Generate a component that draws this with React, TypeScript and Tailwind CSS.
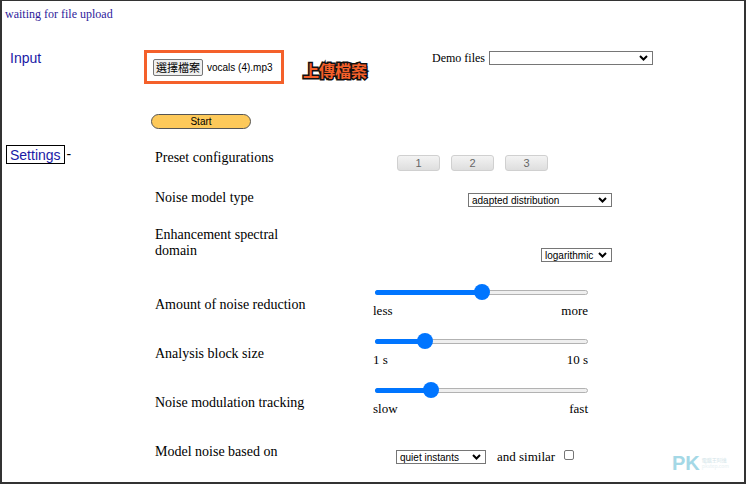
const serif = "font-['Liberation_Serif',serif]";
const sans = "font-['Liberation_Sans',Arial,sans-serif]";

function Chevron() {
  return (
    <svg width="9" height="6" viewBox="0 0 9 6" className="shrink-0">
      <path d="M1 1 L4.5 4.5 L8 1" fill="none" stroke="#000" strokeWidth="2" />
    </svg>
  );
}

function FakeSelect({ text, width }: { text: string; width: string }) {
  return (
    <div
      className={`${width} h-[14px] border border-[#767676] bg-white flex items-center justify-between pl-[3px] pr-[4px] ${sans} text-[10px] leading-[11px] text-black`}
    >
      <span>{text}</span>
      <Chevron />
    </div>
  );
}

function Slider({ value, left, right }: { value: number; left: string; right: string }) {
  const pos = 8 + value * 197;
  return (
    <div className="ml-[3px] w-[216px]">
      <div className="relative w-[213px] h-[16px]">
        <div className="absolute left-0 right-0 top-[6px] h-[5px] rounded-full border border-[#b2b2b2] bg-[#efefef]" />
        <div
          className="absolute left-0 top-[6px] h-[5px] rounded-l-full bg-[#0075ff]"
          style={{ width: pos }}
        />
        <div
          className="absolute top-0 w-[16px] h-[16px] rounded-full bg-[#0075ff]"
          style={{ left: pos - 8 }}
        />
      </div>
      <div className={`-ml-[2px] w-[215px] mt-[3px] flex justify-between ${serif} text-[13px] leading-[15px] text-black`}>
        <span>{left}</span>
        <span>{right}</span>
      </div>
    </div>
  );
}

function Label({ children, className = '' }: { children: React.ReactNode; className?: string }) {
  return (
    <div className={`w-[228px] shrink-0 pl-[11px] ${serif} text-[14px] leading-[16px] text-black ${className}`}>
      {children}
    </div>
  );
}

export default function App() {
  return (
    <div className="relative w-[746px] h-[484px] overflow-hidden bg-white border-l-2 border-t border-r-2 border-b-2 border-[#333]">
      <div className={`pl-[3px] pt-[6px] h-[49px] ${serif} text-[12px] leading-[14px] text-[#2e1b9b]`}>
        waiting for file upload
      </div>

      {/* input row */}
      <div className="flex items-start h-[64px] -mt-[1px]">
        <div className="w-[142px] pl-[4px]">
          <div className={`border border-transparent px-[3px] ${sans} text-[14px] leading-[16px] text-[#1a1aa6]`}>
            Input
          </div>
        </div>
        <div className="mt-[1px] w-[140px] h-[34px] border-[3px] border-[#f4602a] flex items-center pl-[6px] gap-[4px]">
          <div className="h-[17px] px-[2px] border border-[#767676] rounded-[2px] bg-[#efefef] flex items-center text-[11px] leading-[13px] text-black font-['Noto_Sans_CJK_TC',sans-serif]">
            選擇檔案
          </div>
          <span className={`${sans} text-[10px] text-black`}>vocals (4).mp3</span>
        </div>
        <div className="ml-[19px] mt-[11px] text-[16px] leading-[20px] font-bold text-[#f4602a] font-['Noto_Sans_CJK_TC',sans-serif] [-webkit-text-stroke:3px_#111] [paint-order:stroke_fill]">
          上傳檔案
        </div>
        <div className="ml-[65px] mt-[2px] flex items-center gap-[4px]">
          <span className={`${serif} text-[12px] leading-[14px] text-black`}>Demo files</span>
          <FakeSelect text="" width="w-[164px]" />
        </div>
      </div>

      {/* start */}
      <div className="h-[32px] pt-[1px] pl-[149px]">
        <div className={`w-[100px] h-[15px] rounded-full border border-[#555] bg-[#fdc95a] flex items-center justify-center ${sans} text-[10px] leading-[12px] text-black`}>
          Start
        </div>
      </div>

      {/* settings */}
      <div className="flex">
        <div className="w-[142px] pl-[4px] flex items-start">
          <div className={`border border-black px-[3px] h-[19px] flex items-center ${sans} text-[14px] leading-[16px] text-[#1a1aa6]`}>
            Settings
          </div>
          <span className={`ml-[2px] ${sans} text-[14px] leading-[18px] text-black`}>-</span>
        </div>

        <div className="pt-[5px]">
          <div className="flex h-[40px]">
            <Label>Preset configurations</Label>
            <div className="w-[240px] pl-[25px] mt-[5px] flex gap-[11px]">
              {['1', '2', '3'].map((n) => (
                <div
                  key={n}
                  className={`w-[43px] h-[16px] rounded-[3px] border border-[#d0d0d0] bg-gradient-to-b from-[#f3f3f3] to-[#dedede] flex items-center justify-center ${sans} text-[11px] text-[#666]`}
                >
                  {n}
                </div>
              ))}
            </div>
          </div>

          <div className="flex h-[37px]">
            <Label>Noise model type</Label>
            <div className="w-[240px] mt-[3px] flex justify-end">
              <FakeSelect text="adapted distribution" width="w-[144px]" />
            </div>
          </div>

          <div className="flex h-[57px]">
            <Label>
              <div className="w-[130px]">Enhancement spectral domain</div>
            </Label>
            <div className="w-[240px] mt-[21px] flex justify-end">
              <FakeSelect text="logarithmic" width="w-[71px]" />
            </div>
          </div>

          <div className="flex h-[49px]">
            <Label className="mt-[13px]">Amount of noise reduction</Label>
            <Slider value={0.5} left="less" right="more" />
          </div>

          <div className="flex h-[49px]">
            <Label className="mt-[13px]">Analysis block size</Label>
            <Slider value={0.213} left="1 s" right="10 s" />
          </div>

          <div className="flex h-[49px]">
            <Label className="mt-[13px]">Noise modulation tracking</Label>
            <Slider value={0.244} left="slow" right="fast" />
          </div>

          <div className="flex">
            <Label className="mt-[13px]">Model noise based on</Label>
            <div className="ml-[24px] mt-[19px] flex items-center h-[14px]">
              <FakeSelect text="quiet instants" width="w-[90px]" />
              <span className={`ml-[11px] -mt-[2px] ${serif} text-[13px] leading-[15px] text-black`}>and similar</span>
              <div className="ml-[9px] -mt-[4px] w-[10px] h-[10px] rounded-[2px] border border-[#767676] bg-white" />
            </div>
          </div>
        </div>
      </div>

      {/* watermark */}
      <div className="absolute left-[670px] top-[452px] flex items-center gap-[2px] opacity-80">
        <span className={`${sans} font-bold text-[20px] leading-[20px] text-[#8ecfe0]`}>PK</span>
        <div className="flex flex-col text-[5px] leading-[6px] text-[#c8dde4] font-['Noto_Sans_CJK_TC',sans-serif]">
          <span>電腦王阿達</span>
          <span className="text-[#e3eef1]">pkstep.com</span>
        </div>
      </div>
    </div>
  );
}
